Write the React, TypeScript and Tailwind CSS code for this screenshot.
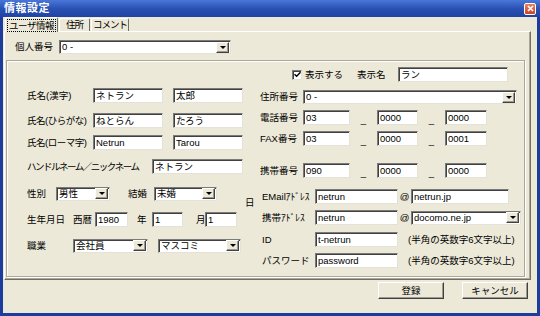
import type { ReactNode } from 'react';

// ── Win XP-ish primitives ────────────────────────────────────────────

const sunken =
  'bg-white border border-t-[#7a7a7a] border-l-[#7a7a7a] border-r-[#e4e2d8] border-b-[#e4e2d8] shadow-[inset_1px_1px_0_#404040]';

function TextBox({ w, value }: { w: string; value: string }) {
  return (
    <div className={`${w} h-[15px] shrink-0 ${sunken} flex items-center pl-[2px] overflow-hidden whitespace-nowrap`}>
      {value}
    </div>
  );
}

function DropBtn() {
  return (
    <div className="w-[13px] h-[11px] shrink-0 bg-[#ece9d8] border border-t-white border-l-white border-r-[#404040] border-b-[#404040] shadow-[inset_-1px_-1px_0_#9d9b90] flex items-center justify-center">
      <svg width="6" height="3" viewBox="0 0 6 3">
        <path d="M0 0h6L3 3z" fill="#000" />
      </svg>
    </div>
  );
}

function Combo({ w, value }: { w: string; value: string }) {
  return (
    <div className={`${w} h-[14px] shrink-0 ${sunken} flex items-center justify-between pl-[2px] pr-[1px] whitespace-nowrap`}>
      <span>{value}</span>
      <DropBtn />
    </div>
  );
}

function Label({ w, children }: { w: string; children: ReactNode }) {
  return <span className={`${w} shrink-0 whitespace-nowrap`}>{children}</span>;
}

function Dash() {
  return <span className="w-[27px] shrink-0 text-center self-end pb-[1px]">_</span>;
}

function CheckBox() {
  return (
    <div className={`w-[10px] h-[10px] shrink-0 ${sunken} flex items-center justify-center`}>
      <svg width="7" height="7" viewBox="0 0 7 7">
        <path d="M0.5 3.2L2.6 5.3L6.5 1.2" stroke="#000" strokeWidth="1.4" fill="none" />
      </svg>
    </div>
  );
}

function Button({ children }: { children: ReactNode }) {
  return (
    <div className="w-[66px] h-[17px] bg-[#ece9d8] border border-t-white border-l-white border-r-[#404040] border-b-[#404040] shadow-[inset_-1px_-1px_0_#9d9b90] flex items-center justify-center whitespace-nowrap">
      {children}
    </div>
  );
}

function PhoneRow({ label, mt, a, b, c }: { label: string; mt: string; a: string; b: string; c: string }) {
  return (
    <div className={`${mt} h-[15px] flex items-center`}>
      <Label w="w-[43px]">{label}</Label>
      <TextBox w="w-[47px]" value={a} />
      <Dash />
      <TextBox w="w-[41px]" value={b} />
      <Dash />
      <TextBox w="w-[42px]" value={c} />
    </div>
  );
}

function Tab({ active, w, children }: { active?: boolean; w: string; children: ReactNode }) {
  if (active) {
    return (
      <div className={`${w} h-[15px] -mb-px bg-[#ece9d8] border-t border-l border-r border-t-white border-l-white border-r-[#716f64] rounded-t-[2px] flex items-center justify-center relative z-10 whitespace-nowrap`}>
        <span className="border border-dotted border-black px-[1px] leading-[11px] tracking-[-0.5px]">{children}</span>
      </div>
    );
  }
  return (
    <div className={`${w} h-[13px] border-t border-l border-r border-t-white border-l-white border-r-[#716f64] rounded-t-[2px] flex items-center justify-center whitespace-nowrap tracking-[-1px]`}>
      {children}
    </div>
  );
}

export default function App() {
  return (
    <div className="w-[540px] h-[316px] bg-[#1d3d9e] flex flex-col overflow-hidden font-['Liberation_Sans','Noto_Sans_CJK_JP',sans-serif] text-[9.5px] leading-none text-black select-none">
      {/* Title bar */}
      <div className="h-[17px] shrink-0 bg-linear-to-b from-[#4a78d8] via-[#2a52b4] to-[#1f44a2] flex items-center justify-between pl-[4px] pr-[4px]">
        <span className="text-white font-bold text-[11px] tracking-[0.5px]">情報設定</span>
        <div className="w-[12px] h-[12px] bg-linear-to-b from-[#e8805c] to-[#c8442a] border border-white rounded-[2px] flex items-center justify-center">
          <svg width="7" height="7" viewBox="0 0 7 7">
            <path d="M1 1L6 6M6 1L1 6" stroke="#fff" strokeWidth="1.6" />
          </svg>
        </div>
      </div>

      {/* Client area */}
      <div className="flex-1 mx-[3px] mb-[3px] bg-[#ece9d8] flex flex-col">
        {/* Tabs */}
        <div className="h-[14px] shrink-0 flex items-end gap-[1px] pl-[2px]">
          <Tab active w="w-[53px]">ユーザ情報</Tab>
          <Tab w="w-[31px]">住所</Tab>
          <Tab w="w-[38px]">コメント</Tab>
        </div>

        {/* Tab page */}
        <div className="ml-[1px] w-[527px] h-[249px] shrink-0 border border-t-white border-l-white border-r-[#716f64] border-b-[#716f64] shadow-[inset_-1px_-1px_0_#aca899] flex flex-col">
          <div className="mt-[8px] pl-[10px] h-[14px] flex items-center">
            <Label w="w-[44px]">個人番号</Label>
            <Combo w="w-[172px]" value="0 -" />
          </div>

          {/* Group box */}
          <div className="mt-[6px] ml-[1px] w-[519px] h-[217px] border border-[#aca899] shadow-[inset_1px_1px_0_#fff,1px_1px_0_#fff] flex">
            {/* Left column */}
            <div className="w-[253px] pl-[20px] flex flex-col">
              <div className="mt-[27px] h-[15px] flex items-center">
                <Label w="w-[66px]">氏名(漢字)</Label>
                <TextBox w="w-[70px]" value="ネトラン" />
                <div className="w-[10px]" />
                <TextBox w="w-[70px]" value="太郎" />
              </div>
              <div className="mt-[10px] h-[15px] flex items-center">
                <Label w="w-[66px] tracking-[-0.5px]">氏名(ひらがな)</Label>
                <TextBox w="w-[70px]" value="ねとらん" />
                <div className="w-[10px]" />
                <TextBox w="w-[70px]" value="たろう" />
              </div>
              <div className="mt-[7px] h-[15px] flex items-center">
                <Label w="w-[66px] tracking-[-0.5px]">氏名(ローマ字)</Label>
                <TextBox w="w-[70px]" value="Netrun" />
                <div className="w-[10px]" />
                <TextBox w="w-[70px]" value="Tarou" />
              </div>
              <div className="mt-[9px] h-[15px] flex items-center">
                <Label w="w-[125px] tracking-[-1.5px]">ハンドルネーム／ニックネーム</Label>
                <TextBox w="w-[91px]" value="ネトラン" />
              </div>
              <div className="mt-[12px] h-[15px] flex items-center">
                <Label w="w-[29px]">性別</Label>
                <Combo w="w-[54px]" value="男性" />
                <Label w="w-[26px] ml-[18px]">結婚</Label>
                <Combo w="w-[63px]" value="未婚" />
                <span className="ml-[28px] self-start mt-[12px]">日</span>
              </div>
              <div className="mt-[11px] h-[15px] flex items-center">
                <Label w="w-[46px]">生年月日</Label>
                <Label w="w-[22px]">西暦</Label>
                <TextBox w="w-[33px]" value="1980" />
                <Label w="w-[15px] ml-[9px]">年</Label>
                <TextBox w="w-[31px]" value="1" />
                <Label w="w-[9px] ml-[13px]">月</Label>
                <TextBox w="w-[32px]" value="1" />
              </div>
              <div className="mt-[11px] h-[15px] flex items-center">
                <Label w="w-[46px]">職業</Label>
                <Combo w="w-[75px]" value="会社員" />
                <div className="w-[10px]" />
                <Combo w="w-[83px]" value="マスコミ" />
              </div>
            </div>

            {/* Right column */}
            <div className="flex-1 flex flex-col">
              <div className="mt-[6px] h-[15px] flex items-center">
                <div className="ml-[32px]">
                  <CheckBox />
                </div>
                <Label w="w-[52px] ml-[3px]">表示する</Label>
                <Label w="w-[41px]">表示名</Label>
                <TextBox w="w-[110px]" value="ラン" />
              </div>
              <div className="mt-[8px] h-[14px] flex items-center">
                <Label w="w-[43px]">住所番号</Label>
                <Combo w="w-[214px]" value="0 -" />
              </div>
              <PhoneRow mt="mt-[6px]" label="電話番号" a="03" b="0000" c="0000" />
              <PhoneRow mt="mt-[6px]" label="FAX番号" a="03" b="0000" c="0001" />
              <PhoneRow mt="mt-[17px]" label="携帯番号" a="090" b="0000" c="0000" />
              <div className="mt-[11px] h-[15px] flex items-center">
                <Label w="w-[53px] ml-[2px]">EMailｱﾄﾞﾚｽ</Label>
                <TextBox w="w-[83px]" value="netrun" />
                <span className="w-[13px] text-center">@</span>
                <TextBox w="w-[98px]" value="netrun.jp" />
              </div>
              <div className="mt-[6px] h-[15px] flex items-center">
                <Label w="w-[53px] ml-[2px]">携帯ｱﾄﾞﾚｽ</Label>
                <TextBox w="w-[83px]" value="netrun" />
                <span className="w-[13px] text-center">@</span>
                <Combo w="w-[110px]" value="docomo.ne.jp" />
              </div>
              <div className="mt-[7px] h-[15px] flex items-center">
                <Label w="w-[53px] ml-[2px]">ID</Label>
                <TextBox w="w-[83px]" value="t-netrun" />
                <span className="ml-[10px] whitespace-nowrap">(半角の英数字6文字以上)</span>
              </div>
              <div className="mt-[6px] h-[15px] flex items-center">
                <Label w="w-[53px] ml-[2px]">パスワード</Label>
                <TextBox w="w-[83px]" value="password" />
                <span className="ml-[10px] whitespace-nowrap">(半角の英数字6文字以上)</span>
              </div>
            </div>
          </div>
        </div>

        {/* Buttons */}
        <div className="mt-[2px] h-[17px] flex justify-end gap-[18px] pr-[9px]">
          <Button>登録</Button>
          <Button>キャンセル</Button>
        </div>
      </div>
    </div>
  );
}
